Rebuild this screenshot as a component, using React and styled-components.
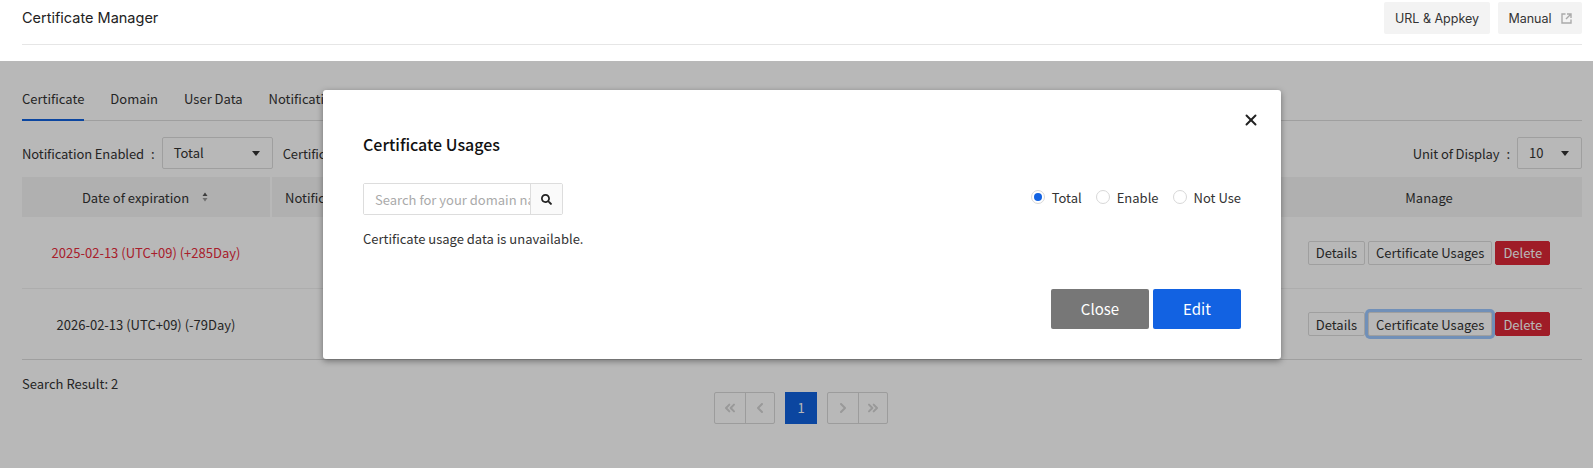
import React from 'react';
import styled, { createGlobalStyle } from 'styled-components';
import { FaSearch } from 'react-icons/fa';
import { ChevronLeft, ChevronRight, ChevronsLeft, ChevronsRight, X } from 'lucide-react';

const GlobalStyle = createGlobalStyle`
    html, body {
        margin: 0;
        padding: 0;
        background: #fff;
        overflow: hidden;
    }
    body {
        font-family: "Noto Sans CJK KR", "Noto Sans", sans-serif;
        font-size: 13px;
        color: #333;
    }
    * {
        box-sizing: border-box;
    }
`;

const Page = styled.div`
    position: relative;
    width: 1593px;
    height: 468px;
    overflow: hidden;
`;

const Header = styled.header`
    height: 61px;
    padding: 0 11px 0 22px;
`;

const HeaderBar = styled.div`
    display: flex;
    justify-content: space-between;
    height: 45px;
    padding-top: 2px;
    border-bottom: 1px solid #e6e6e6;
`;

const Title = styled.h1`
    margin: 0;
    font-family: Inter, sans-serif;
    font-size: 14.5px;
    font-weight: 400;
    line-height: 32px;
    color: #222;
`;

const HeaderActions = styled.div`
    display: flex;
    gap: 8px;
`;

const HeaderButton = styled.button`
    display: flex;
    align-items: center;
    justify-content: center;
    gap: 9px;
    width: ${(p) => p.$width}px;
    height: 32px;
    border: 0;
    border-radius: 2px;
    background: #f3f3f3;
    font-family: Inter, sans-serif;
    font-size: 12.5px;
    color: #333;
`;

const Content = styled.main`
    padding: 22px 11px 0 22px;
`;

const Tabs = styled.nav`
    display: flex;
    gap: 26px;
    height: 38px;
    border-bottom: 1px solid #ddd;
`;

const Tab = styled.a`
    height: 38px;
    padding-top: 6px;
    line-height: 20px;
    font-size: 13px;
    color: #333;
    border-bottom: ${(p) => (p.$active ? '2px solid #1061de' : '0')};
`;

const Filters = styled.div`
    display: flex;
    align-items: center;
    height: 32px;
    margin-top: 16px;
`;

const FilterLabel = styled.span`
    letter-spacing: -0.1px;
`;

const Colon = styled.span`
    margin: 0 7px 0 7px;
`;

const Select = styled.div`
    display: flex;
    align-items: center;
    justify-content: space-between;
    width: ${(p) => p.$width}px;
    height: 32px;
    padding: 0 12px 2px 11px;
    margin-right: ${(p) => p.$gap || 0}px;
    border: 1px solid #ddd;
    border-radius: 2px;
    background: #fff;
`;

const Caret = styled.span`
    width: 0;
    height: 0;
    margin-top: 2px;
    border-left: 4px solid transparent;
    border-right: 4px solid transparent;
    border-top: 5px solid #333;
`;

const Spacer = styled.div`
    flex: 1;
`;

const TableRow = styled.div`
    display: grid;
    grid-template-columns: 248px 1fr 306px;
    align-items: center;
    height: ${(p) => p.$height}px;
    border-bottom: 1px solid ${(p) => (p.$last ? '#ddd' : '#f0f0f0')};
`;

const TableHead = styled(TableRow)`
    height: 40px;
    margin-top: 8px;
    background: #f4f4f4;
    border-bottom: 0;
`;

const HeadCell = styled.div`
    display: flex;
    align-items: center;
    justify-content: ${(p) => (p.$left ? 'flex-start' : 'center')};
    gap: 13px;
    height: 40px;
    padding-left: ${(p) => (p.$left ? 13 : 0)}px;
    padding-right: ${(p) => (p.$sortable ? 2 : 0)}px;
    border-left: ${(p) => (p.$left ? '2px solid #fff' : '0')};
`;

const Cell = styled.div`
    text-align: center;
    color: ${(p) => (p.$expired ? '#e92b3c' : '#333')};
`;

const ManageCell = styled.div`
    display: flex;
    justify-content: center;
    gap: 3px;
`;

const RowButton = styled.button`
    height: 24px;
    padding: 0 7px;
    border: 1px solid ${(p) => (p.$danger ? '#dd2736' : '#ddd')};
    border-radius: 2px;
    background: ${(p) => (p.$danger ? '#dd2736' : '#fff')};
    color: ${(p) => (p.$danger ? '#fff' : '#333')};
    font-family: inherit;
    font-size: 13px;
    box-shadow: ${(p) => (p.$focused ? '0 0 0 3px #9dc8ff' : 'none')};
`;

const Footer = styled.div`
    display: grid;
    grid-template-columns: 1fr auto 1fr;
    align-items: start;
`;

const ResultCount = styled.div`
    padding-top: 15px;
    line-height: 18px;
`;

const Pagination = styled.div`
    display: flex;
    gap: 10px;
    margin-top: 32px;
    padding-right: 2px;
`;

const PageGroup = styled.div`
    display: flex;
    border: 1px solid #d9d9d9;
    border-radius: 2px;
    height: 32px;
`;

const PageButton = styled.div`
    display: flex;
    align-items: center;
    justify-content: center;
    width: 29.5px;
    color: #d4d4d4;
    & + & {
        border-left: 1px solid #d9d9d9;
    }
`;

const CurrentPage = styled.div`
    width: 32px;
    height: 32px;
    line-height: 32px;
    text-align: center;
    background: #1061de;
    color: #fff;
`;

const Overlay = styled.div`
    position: absolute;
    top: 61px;
    left: 0;
    right: 0;
    bottom: 0;
    background: rgba(0, 0, 0, 0.28);
`;

const Modal = styled.section`
    position: relative;
    width: 958px;
    height: 269px;
    margin: 29px 0 0 323px;
    padding: 44px 40px 0;
    border-radius: 3px;
    background: #fff;
    box-shadow: 0 2px 6px rgba(0, 0, 0, 0.4);
`;

const CloseButton = styled.button`
    position: absolute;
    top: 21px;
    right: 21px;
    display: flex;
    padding: 0;
    border: 0;
    background: none;
    color: #222;
`;

const ModalTitle = styled.h2`
    margin: 0;
    font-size: 16px;
    font-weight: 500;
    line-height: 20px;
    color: #111;
`;

const ModalToolbar = styled.div`
    display: flex;
    align-items: center;
    justify-content: space-between;
    margin-top: 29px;
`;

const SearchBox = styled.div`
    display: flex;
    width: 200px;
    height: 32px;
    border: 1px solid #ddd;
    border-radius: 2px;
`;

const SearchInput = styled.input`
    width: 166px;
    min-width: 0;
    padding: 0 0 0 11px;
    border: 0;
    outline: 0;
    font-family: inherit;
    font-size: 13px;
    &::placeholder {
        color: #aaa;
    }
`;

const SearchButton = styled.div`
    display: flex;
    flex: 1;
    align-items: center;
    justify-content: center;
    background: #fafafa;
    border-left: 1px solid #ddd;
    color: #222;
`;

const RadioGroup = styled.div`
    display: flex;
    gap: 14px;
    margin-top: -4px;
`;

const RadioLabel = styled.label`
    display: flex;
    align-items: center;
    gap: 7px;
`;

const RadioMark = styled.span`
    display: flex;
    align-items: center;
    justify-content: center;
    width: 14px;
    height: 14px;
    border: 1px solid #d8d8d8;
    border-radius: 50%;
    &::after {
        content: '';
        display: ${(p) => (p.$checked ? 'block' : 'none')};
        width: 8px;
        height: 8px;
        border-radius: 50%;
        background: #1262e2;
    }
`;

const Message = styled.p`
    margin: 14px 0 0;
    line-height: 20px;
`;

const ModalActions = styled.div`
    display: flex;
    justify-content: flex-end;
    gap: 4px;
    margin-top: 40px;
`;

const ModalButton = styled.button`
    width: ${(p) => p.$width}px;
    height: 40px;
    padding: 0 0 2px;
    border: 0;
    border-radius: 2px;
    background: ${(p) => (p.$primary ? '#1262e2' : '#777')};
    color: #fff;
    font-family: inherit;
    font-size: 15px;
    font-weight: 400;
`;

const SortIcon = () => (
    <svg width="6" height="10" viewBox="0 0 6 10">
        <path d="M3 0.5L5.5 4H0.5Z" fill="#555" />
        <path d="M3 9.5L5.5 6H0.5Z" fill="#999" />
    </svg>
);

const ExternalIcon = () => (
    <svg width="11" height="11" viewBox="0 0 11 11" fill="none" stroke="#aaa" strokeWidth="1.4">
        <path d="M4.5 1H1V10H10V6.5" />
        <path d="M6 1H10V5M10 1L5 6" />
    </svg>
);

const rows = [
    { id: 1, date: '2025-02-13 (UTC+09) (+285Day)', expired: true },
    { id: 2, date: '2026-02-13 (UTC+09) (-79Day)', focused: true },
];

const App = () => (
    <Page>
        <GlobalStyle />
        <Header>
            <HeaderBar>
                <Title>Certificate Manager</Title>
                <HeaderActions>
                    <HeaderButton $width={106}>URL &amp; Appkey</HeaderButton>
                    <HeaderButton $width={84}>Manual <ExternalIcon /></HeaderButton>
                </HeaderActions>
            </HeaderBar>
        </Header>
        <Content>
            <Tabs>
                <Tab $active>Certificate</Tab>
                <Tab>Domain</Tab>
                <Tab>User Data</Tab>
                <Tab>Notification</Tab>
            </Tabs>
            <Filters>
                <FilterLabel>Notification Enabled</FilterLabel>
                <Colon>:</Colon>
                <Select $width={111} $gap={10}>Total <Caret /></Select>
                <FilterLabel>Certificate</FilterLabel>
                <Spacer />
                <FilterLabel>Unit of Display</FilterLabel>
                <Colon>:</Colon>
                <Select $width={65}>10 <Caret /></Select>
            </Filters>
            <TableHead>
                <HeadCell $sortable>Date of expiration <SortIcon /></HeadCell>
                <HeadCell $left>Notification</HeadCell>
                <HeadCell>Manage</HeadCell>
            </TableHead>
            {rows.map((row, i) => (
                <TableRow key={row.id} $height={i === 0 ? 72 : 71} $last={i === rows.length - 1}>
                    <Cell $expired={row.expired}>{row.date}</Cell>
                    <div />
                    <ManageCell>
                        <RowButton>Details</RowButton>
                        <RowButton $focused={row.focused}>Certificate Usages</RowButton>
                        <RowButton $danger>Delete</RowButton>
                    </ManageCell>
                </TableRow>
            ))}
            <Footer>
                <ResultCount>Search Result: 2</ResultCount>
                <Pagination>
                    <PageGroup>
                        <PageButton><ChevronsLeft size={16} strokeWidth={3} /></PageButton>
                        <PageButton><ChevronLeft size={16} strokeWidth={3} /></PageButton>
                    </PageGroup>
                    <CurrentPage>1</CurrentPage>
                    <PageGroup>
                        <PageButton><ChevronRight size={16} strokeWidth={3} /></PageButton>
                        <PageButton><ChevronsRight size={16} strokeWidth={3} /></PageButton>
                    </PageGroup>
                </Pagination>
            </Footer>
        </Content>
        <Overlay>
            <Modal>
                <CloseButton><X size={18} strokeWidth={2.6} /></CloseButton>
                <ModalTitle>Certificate Usages</ModalTitle>
                <ModalToolbar>
                    <SearchBox>
                        <SearchInput placeholder="Search for your domain name" />
                        <SearchButton><FaSearch size={11} /></SearchButton>
                    </SearchBox>
                    <RadioGroup>
                        <RadioLabel><RadioMark $checked />Total</RadioLabel>
                        <RadioLabel><RadioMark />Enable</RadioLabel>
                        <RadioLabel><RadioMark />Not Use</RadioLabel>
                    </RadioGroup>
                </ModalToolbar>
                <Message>Certificate usage data is unavailable.</Message>
                <ModalActions>
                    <ModalButton $width={98}>Close</ModalButton>
                    <ModalButton $width={88} $primary>Edit</ModalButton>
                </ModalActions>
            </Modal>
        </Overlay>
    </Page>
);

export default App;
